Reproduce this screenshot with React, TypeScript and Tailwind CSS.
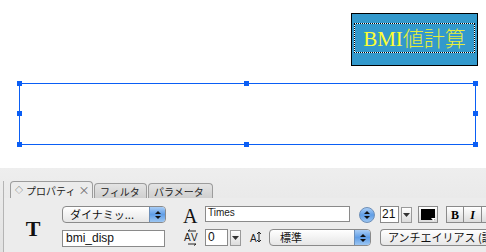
const jp = "font-['Lucida_Grande','Noto_Sans_CJK_JP',sans-serif]";

const Handle = ({ className }: { className: string }) => (
  <div className={`absolute w-[5px] h-[5px] bg-[#0a5ef5] ${className}`} />
);

const Stepper = ({ className = "" }: { className?: string }) => (
  <div
    className={`shrink-0 flex flex-col items-center justify-center gap-[2px] bg-gradient-to-b from-[#a9cdf5] via-[#5f9de6] to-[#9cc6f2] border border-[#6d8fb8] ${className}`}
  >
    <svg width="6" height="3" viewBox="0 0 6 3">
      <path d="M0 3 L3 0 L6 3 Z" fill="#111" />
    </svg>
    <svg width="6" height="3" viewBox="0 0 6 3">
      <path d="M0 0 L3 3 L6 0 Z" fill="#111" />
    </svg>
  </div>
);

const DropArrow = () => (
  <div className="shrink-0 w-[11px] h-[16px] ml-[2px] flex items-center justify-center border border-[#9a9a9a] bg-gradient-to-b from-white to-[#dcdcdc]">
    <svg width="7" height="4" viewBox="0 0 7 4">
      <path d="M0 0 L7 0 L3.5 4 Z" fill="#333" />
    </svg>
  </div>
);

const App = () => {
  return (
    <div className="w-[486px] h-[252px] overflow-hidden bg-white font-['Liberation_Sans',sans-serif]">
      {/* canvas */}
      <div className="h-[168px] flex flex-col">
        <div className="flex justify-end pt-[13px] pr-[8px]">
          <div className="w-[127px] h-[53px] border border-black bg-[#3399cc] pt-[9px] px-[2px]">
            <div className="h-[30px] border border-dotted border-black bg-white">
              <div className="h-full bg-[#3399cc] flex items-center justify-center">
                <span className="text-[#ffff33] text-[21px] leading-none font-['Liberation_Serif','Noto_Sans_CJK_JP',serif]">
                  BMI<span className="font-['Noto_Sans_CJK_JP',serif] font-light text-[#e6ee3a]">値計算</span>
                </span>
              </div>
            </div>
          </div>
        </div>
        <div className="relative mt-[17px] ml-[19px] w-[457px] h-[62px] border border-[#0a5ef5]">
          <Handle className="-left-[3px] -top-[3px]" />
          <Handle className="left-[224px] -top-[3px]" />
          <Handle className="-right-[3px] -top-[3px]" />
          <Handle className="-left-[3px] top-[27px]" />
          <Handle className="-right-[3px] top-[27px]" />
          <Handle className="-left-[3px] -bottom-[3px]" />
          <Handle className="left-[224px] -bottom-[3px]" />
          <Handle className="-right-[3px] -bottom-[3px]" />
        </div>
      </div>

      {/* properties panel */}
      <div className="h-[84px] bg-gradient-to-b from-[#eeeeee] to-[#e2e2e2] pl-[3px] pt-[13px] flex flex-col">
        <div className={`flex items-end h-[17px] pl-[6px] gap-[1px] text-[10px] text-[#222] whitespace-nowrap border-l border-[#b4b4b4] ${jp}`}>
          <div className="shrink-0 h-[17px] w-[83px] flex items-center gap-[3px] pl-[4px] rounded-t-[4px] border border-b-0 border-[#9c9c9c] bg-[#ececec]">
            <span className="text-[8px] text-[#555]">◇</span>
            <span>プロパティ</span>
            <span className="text-[#666] text-[11px]">×</span>
          </div>
          <div className="shrink-0 h-[15px] w-[53px] flex items-center pl-[5px] rounded-t-[4px] border border-b-0 border-[#9c9c9c] bg-gradient-to-b from-[#e4e4e4] to-[#cfcfcf]">
            フィルタ
          </div>
          <div className="shrink-0 h-[15px] w-[65px] flex items-center pl-[5px] rounded-t-[4px] border border-b-0 border-[#9c9c9c] bg-gradient-to-b from-[#e4e4e4] to-[#cfcfcf]">
            パラメータ
          </div>
        </div>
        <div className="flex-1 bg-[#ececec] border-l border-[#b4b4b4] flex pt-[8px] overflow-hidden">
          {/* T icon */}
          <div className="shrink-0 w-[58px] flex justify-center pt-[12px]">
            <span className="font-['Liberation_Serif',serif] font-bold text-[22px] leading-none text-[#111]">T</span>
          </div>
          {/* type column */}
          <div className="shrink-0 w-[104px] flex flex-col gap-[7px]">
            <div className={`h-[17px] flex rounded-[4px] border border-[#8a8a8a] bg-gradient-to-b from-white to-[#e6e6e6] overflow-hidden ${jp}`}>
              <span className="flex-1 text-[11px] leading-[15px] pl-[7px] text-[#111] whitespace-nowrap">ダイナミッ...</span>
              <Stepper className="w-[16px] border-0 border-l" />
            </div>
            <div className="h-[17px] w-[103px] border border-[#8a8a8a] bg-white text-[12px] leading-[15px] pl-[3px] text-[#111]">
              bmi_disp
            </div>
          </div>
          {/* font area */}
          <div className="shrink-0 ml-[17px] flex flex-col gap-[6px]">
            <div className="flex items-center h-[17px]">
              <span className="shrink-0 w-[22px] font-['Liberation_Serif',serif] text-[20px] leading-none text-[#111] pt-[3px]">A</span>
              <div className="shrink-0 w-[145px] h-[16px] border border-[#8a8a8a] bg-white text-[10px] leading-[12px] pl-[2px] text-[#222] self-start">
                Times
              </div>
              <Stepper className="ml-[9px] w-[16px] h-[16px] rounded-full" />
              <div className="shrink-0 ml-[5px] w-[19px] h-[17px] border border-[#8a8a8a] bg-white text-[12px] leading-[15px] pl-[1px] text-[#111]">21</div>
              <DropArrow />
              <div className="shrink-0 ml-[6px] w-[20px] h-[17px] border border-[#8a8a8a] bg-gradient-to-b from-white to-[#dcdcdc] p-[2px] relative">
                <div className="w-full h-full bg-black" />
                <svg className="absolute right-[1px] bottom-[1px]" width="5" height="3" viewBox="0 0 5 3">
                  <path d="M0 0 L5 0 L2.5 3 Z" fill="#fff" />
                </svg>
              </div>
              <div className="shrink-0 ml-[8px] flex">
                <div className="w-[18px] h-[17px] border border-[#8a8a8a] bg-gradient-to-b from-white to-[#dcdcdc] flex items-center justify-center font-['Liberation_Serif',serif] font-bold text-[12px]">B</div>
                <div className="w-[18px] h-[17px] border border-l-0 border-[#8a8a8a] bg-gradient-to-b from-white to-[#dcdcdc] flex items-center justify-center font-['Liberation_Serif',serif] font-bold italic text-[12px]">I</div>
                <div className="w-[10px] h-[17px] border border-l-0 border-[#8a8a8a] bg-gradient-to-b from-white to-[#dcdcdc]" />
              </div>
            </div>
            <div className="flex items-center h-[17px]">
              <svg width="22" height="17" viewBox="0 0 22 17" className="shrink-0">
                <text x="1" y="12" fontSize="10" fontFamily="Liberation Sans" fill="#222">A</text>
                <text x="8" y="12" fontSize="10" fontFamily="Liberation Sans" fill="#222">V</text>
                <path d="M5 2 L13 2 M5 15 L13 15" stroke="#222" strokeWidth="1" />
                <path d="M5 2 L7 0.5 M13 15 L11 16.5" stroke="#222" strokeWidth="1" />
              </svg>
              <div className="shrink-0 w-[23px] h-[17px] border border-[#8a8a8a] bg-white text-[12px] leading-[15px] pl-[2px] text-[#111]">0</div>
              <DropArrow />
              <svg width="20" height="17" viewBox="0 0 20 17" className="ml-[8px] shrink-0">
                <text x="1" y="13" fontSize="10" fontFamily="Liberation Sans" fill="#222">A</text>
                <path d="M10 3 L10 13 M8 5 L10 3 L12 5 M8 11 L10 13 L12 11" stroke="#222" strokeWidth="1" fill="none" />
              </svg>
              <div className={`shrink-0 w-[102px] h-[17px] flex rounded-[4px] border border-[#8a8a8a] bg-gradient-to-b from-white to-[#e6e6e6] overflow-hidden ${jp}`}>
                <span className="flex-1 text-[11px] leading-[15px] pl-[10px] text-[#111]">標準</span>
                <Stepper className="w-[16px] border-0 border-l" />
              </div>
              <div className={`shrink-0 ml-[9px] w-[120px] h-[17px] rounded-l-[4px] border border-r-0 border-[#8a8a8a] bg-gradient-to-b from-white to-[#e6e6e6] text-[11px] leading-[15px] pl-[7px] whitespace-nowrap overflow-hidden text-[#111] ${jp}`}>
                アンチエイリアス (読
              </div>
            </div>
          </div>
        </div>
      </div>
    </div>
  );
};

export default App;
